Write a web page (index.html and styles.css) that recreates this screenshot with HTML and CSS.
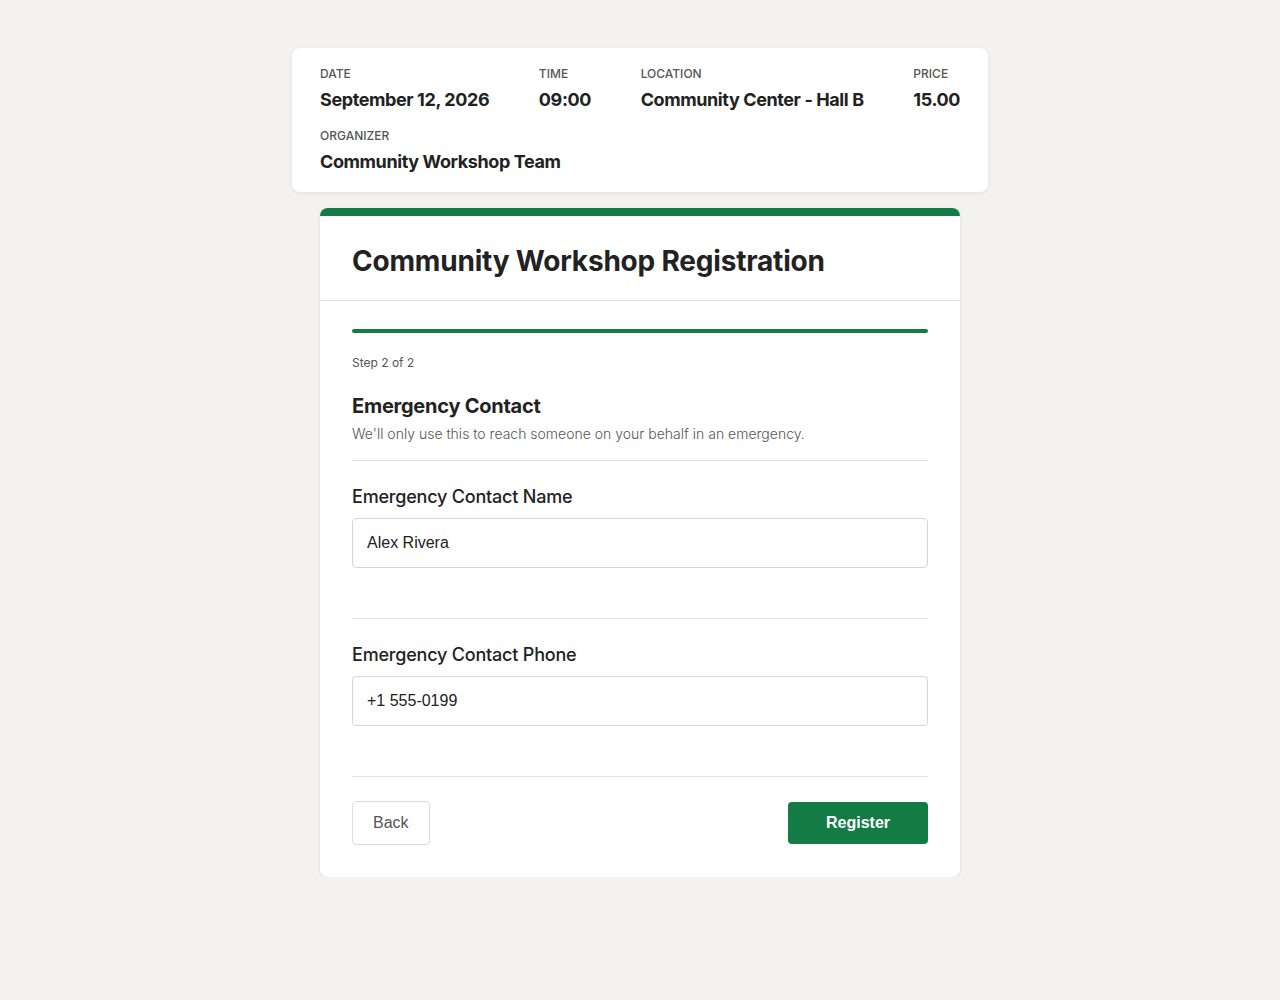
FILE: index.html
```html
<!DOCTYPE html>
<html lang="en">
	<head>
		<meta charset="UTF-8" />
		<meta name="viewport" content="width=device-width, initial-scale=1.0" />
		<title>Community Workshop Registration</title>
		<link rel="stylesheet" href="styles.css">
	</head>
	<body>
		<div class="page">
			<section class="event-info">
				<div class="info-item">
					<div class="info-label">Date</div>
					<div class="info-value">September 12, 2026</div>
				</div>
				<div class="info-item">
					<div class="info-label">Time</div>
					<div class="info-value">09:00</div>
				</div>
				<div class="info-item">
					<div class="info-label">Location</div>
					<div class="info-value">Community Center - Hall B</div>
				</div>
				<div class="info-item">
					<div class="info-label">Price</div>
					<div class="info-value">15.00</div>
				</div>
				<div class="info-item">
					<div class="info-label">Organizer</div>
					<div class="info-value">Community Workshop Team</div>
				</div>
			</section>

			<form class="form-card" id="registration-form">
				<div class="form-header">
					<h1>Community Workshop Registration</h1>
				</div>
				<div class="form-body">
					<div class="progress"><div class="progress-fill" style="width: 100%"></div></div>
					<div class="step">Step 2 of 2</div>

					<div class="section-head">
						<h2>Emergency Contact</h2>
						<p>We'll only use this to reach someone on your behalf in an emergency.</p>
					</div>

					<div class="field">
						<label for="ec-name">Emergency Contact Name</label>
						<input type="text" id="ec-name" name="ec_name" value="Alex Rivera" />
					</div>
					<div class="field">
						<label for="ec-phone">Emergency Contact Phone</label>
						<input type="tel" id="ec-phone" name="ec_phone" value="+1 555-0199" />
					</div>

					<div class="actions">
						<button type="button" class="btn-back">Back</button>
						<button type="submit" class="btn-submit">Register</button>
					</div>
				</div>
			</form>
		</div>
	</body>
</html>
```

FILE: styles.css
```css
body {
	margin: 0;
	background-color: #f3f2f0;
	font-family: Inter, "Noto Sans", sans-serif;
	color: #222;
}
.page {
	display: flex;
	flex-direction: column;
	align-items: center;
	gap: 16px;
	padding-top: 48px;
}
.event-info {
	box-sizing: border-box;
	width: 696px;
	display: flex;
	flex-wrap: wrap;
	justify-content: space-between;
	column-gap: 24px;
	row-gap: 16px;
	padding: 18px 28px 18px;
	background: #fff;
	border-radius: 8px;
	box-shadow: 0 1px 4px rgba(0, 0, 0, 0.08);
}
.info-label {
	font-size: 12px;
	line-height: 16px;
	font-weight: 500;
	text-transform: uppercase;
	color: #555;
}
.info-value {
	margin-top: 6px;
	font-size: 18px;
	line-height: 24px;
	font-weight: 700;
	letter-spacing: -0.4px;
}
.form-card {
	box-sizing: border-box;
	width: 640px;
	background: #fff;
	border-top: 8px solid #137b44;
	border-radius: 8px;
	box-shadow: 0 1px 4px rgba(0, 0, 0, 0.08);
}
.form-header {
	padding: 27px 32px 21px;
	border-bottom: 1px solid #e2e2e2;
}
h1 {
	margin: 0;
	font-size: 28px;
	line-height: 36px;
	font-weight: 700;
	letter-spacing: -0.2px;
}
.form-body {
	padding: 28px 32px 32px;
}
.progress {
	height: 4px;
	border-radius: 2px;
	background: #e4e4e4;
	overflow: hidden;
}
.progress-fill {
	height: 100%;
	background: #137b44;
}
.step {
	margin-top: 21px;
	font-size: 12px;
	line-height: 18px;
	color: #555;
}
.section-head {
	margin-top: 20px;
	padding-bottom: 16px;
	border-bottom: 1px solid #e2e2e2;
}
h2 {
	margin: 0;
	font-size: 20px;
	line-height: 28px;
	font-weight: 700;
	letter-spacing: -0.25px;
}
.section-head p {
	margin: 4px 0 0;
	font-size: 14px;
	line-height: 20px;
	font-weight: 300;
	color: #555;
}
.field {
	display: flex;
	flex-direction: column;
	padding: 24px 0 50px;
	border-bottom: 1px solid #e2e2e2;
}
.field label {
	font-size: 18px;
	line-height: 24px;
	font-weight: 500;
	letter-spacing: -0.2px;
	margin-bottom: 9px;
}
.field input {
	box-sizing: border-box;
	height: 50px;
	padding: 0 14px;
	border: 1px solid #d3d6d6;
	border-radius: 4px;
	font-family: "Liberation Sans", Arial, sans-serif;
	font-size: 16px;
	color: #222;
	outline: none;
}
.actions {
	display: flex;
	justify-content: space-between;
	align-items: center;
	padding-top: 24px;
}
.btn-back {
	height: 44px;
	padding: 0 20px;
	background: #fff;
	border: 1px solid #dcdcdc;
	border-radius: 4px;
	font-family: "Liberation Sans", Arial, sans-serif;
	font-size: 16px;
	color: #555;
}
.btn-submit {
	width: 140px;
	height: 42px;
	background: #137b44;
	border: none;
	border-radius: 4px;
	font-family: "Liberation Sans", Arial, sans-serif;
	font-size: 16px;
	font-weight: 700;
	color: #fff;
}
```
